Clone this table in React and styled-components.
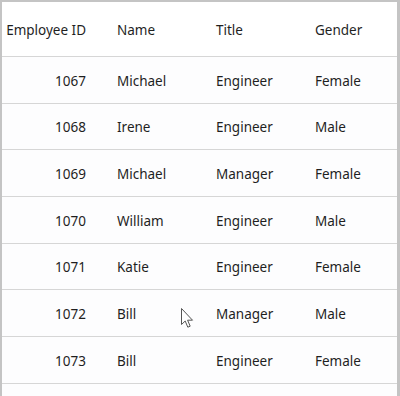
import React from 'react';
import styled, { createGlobalStyle } from 'styled-components';

const employees = [
  { id: 1067, name: 'Michael', title: 'Engineer', gender: 'Female' },
  { id: 1068, name: 'Irene', title: 'Engineer', gender: 'Male' },
  { id: 1069, name: 'Michael', title: 'Manager', gender: 'Female' },
  { id: 1070, name: 'William', title: 'Engineer', gender: 'Male' },
  { id: 1071, name: 'Katie', title: 'Engineer', gender: 'Female' },
  { id: 1072, name: 'Bill', title: 'Manager', gender: 'Male' },
  { id: 1073, name: 'Bill', title: 'Engineer', gender: 'Female' },
];

const GlobalStyle = createGlobalStyle`
  html, body {
    margin: 0;
    padding: 0;
    background: #fff;
  }
  body {
    font-family: "Noto Sans", "Open Sans", sans-serif;
  }
`;

const Grid = styled.div`
  position: relative;
  width: 400px;
  height: 396px;
  box-sizing: border-box;
  border-top: 2px solid #c4c4c4;
  border-left: 2px solid #c4c4c4;
  border-right: 3px solid #c4c4c4;
  background: #fff;
  overflow: hidden;
`;

const Row = styled.div`
  display: grid;
  grid-template-columns: 106px 99px 99px 1fr;
  align-items: center;
  height: ${(p) => (p.header ? '55px' : '46.67px')};
  border-bottom: 1px solid #d6d6d6;
  box-sizing: border-box;
  background: ${(p) => (p.header ? '#fff' : '#fdfdfe')};
`;

const Cell = styled.div`
  font-size: 13.5px;
  color: #1f1f1f;
  white-space: nowrap;
  text-align: ${(p) => (p.numeric ? 'right' : 'left')};
  padding: ${(p) => (p.numeric ? '2px 22px 0 0' : '2px 0 0 9px')};
`;

const Cursor = styled.svg`
  position: absolute;
  left: 177px;
  top: 305px;
  pointer-events: none;
`;

export default function App() {
  return (
    <>
      <GlobalStyle />
      <Grid>
        <Row header>
          <Cell numeric>Employee ID</Cell>
          <Cell>Name</Cell>
          <Cell>Title</Cell>
          <Cell>Gender</Cell>
        </Row>
        {employees.map((e) => (
          <Row key={e.id}>
            <Cell numeric>{e.id}</Cell>
            <Cell>{e.name}</Cell>
            <Cell>{e.title}</Cell>
            <Cell>{e.gender}</Cell>
          </Row>
        ))}
        <Row />
        <Cursor width="16" height="24" viewBox="0 0 16 24">
          <path
            d="M2.5 1.5 L2.5 17.5 L6.2 14 L8.8 20.2 L11.2 19.2 L8.6 13.2 L13.5 13.2 Z"
            fill="#fff"
            stroke="#555"
            strokeWidth="1"
            strokeLinejoin="round"
          />
        </Cursor>
      </Grid>
    </>
  );
}
